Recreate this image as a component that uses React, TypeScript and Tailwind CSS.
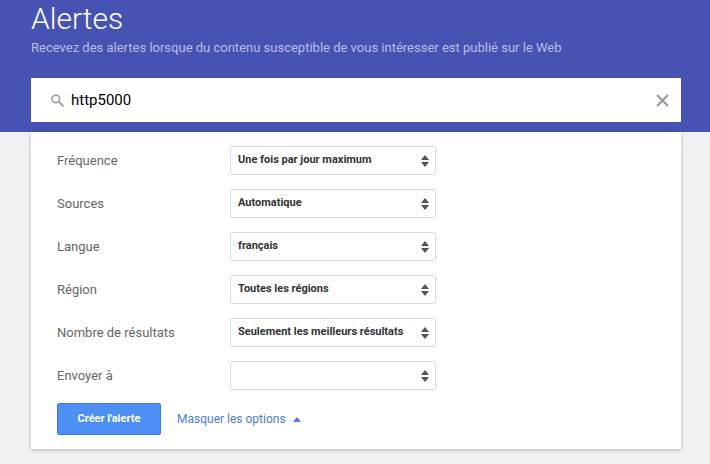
import React from "react";

const rows: [string, string][] = [
  ["Fréquence", "Une fois par jour maximum"],
  ["Sources", "Automatique"],
  ["Langue", "français"],
  ["Région", "Toutes les régions"],
  ["Nombre de résultats", "Seulement les meilleurs résultats"],
  ["Envoyer à", ""],
];

function Arrows() {
  return (
    <svg width="8" height="12" viewBox="0 0 8 12" className="absolute right-[6px] top-[8px]">
      <path d="M4 0 L8 5 L0 5 Z" fill="#555" />
      <path d="M4 12 L8 7 L0 7 Z" fill="#555" />
    </svg>
  );
}

export default function App() {
  return (
    <div className="w-[710px] h-[464px] bg-[#f1f1f1] overflow-hidden" style={{ fontFamily: "Roboto, 'Liberation Sans', sans-serif" }}>
      <div className="bg-[#4753b3] h-[132px] px-[31px] pt-[1px]">
        <div className="text-white text-[30px] font-light leading-[36px]">Alertes</div>
        <div className="text-[#b8bde6] text-[13px] leading-[16px] mt-[3px]">
          Recevez des alertes lorsque du contenu susceptible de vous intéresser est publié sur le Web
        </div>
        <div className="bg-white h-[44px] w-[650px] mt-[22px] flex items-center pl-[19px] pr-[12px]">
          <svg width="14" height="14" viewBox="0 0 24 24" className="mr-[7px]">
            <circle cx="10" cy="10" r="6.5" fill="none" stroke="#a6a6a6" strokeWidth="3" />
            <path d="M15 15 L22 22" stroke="#a6a6a6" strokeWidth="3.5" strokeLinecap="round" />
          </svg>
          <span className="text-[15px] text-black flex-1">http5000</span>
          <svg width="13" height="13" viewBox="0 0 12 12">
            <path d="M1 1 L11 11 M11 1 L1 11" stroke="#9a9a9a" strokeWidth="2" />
          </svg>
        </div>
      </div>
      <div className="bg-white w-[650px] ml-[31px] h-[317px] shadow-[0_1px_4px_rgba(0,0,0,0.25)] pl-[26px] pt-[14px]">
        {rows.map(([l, v]) => (
          <div key={l} className="flex items-center h-[29px] mb-[14px]">
            <div className="w-[173px] text-[13px] text-[#666]">{l}</div>
            <div className="relative w-[206px] h-[29px] border border-[#dcdcdc] rounded-[2px] flex items-center pl-[7px] text-[11px] font-bold text-[#333]">
              {v}
              <Arrows />
            </div>
          </div>
        ))}
        <div className="flex items-center mt-[-1px]">
          <div className="w-[104px] h-[32px] bg-[#4d8ff5] rounded-[2px] border border-[#3b7be4] text-white text-[11px] font-bold flex items-center justify-center">
            Créer l'alerte
          </div>
          <div className="ml-[16px] text-[12px] text-[#4d7de0] flex items-center">
            Masquer les options
            <svg width="8" height="5" viewBox="0 0 8 5" className="ml-[7px]"><path d="M4 0 L8 5 L0 5 Z" fill="#4d7de0" /></svg>
          </div>
        </div>
      </div>
    </div>
  );
}
